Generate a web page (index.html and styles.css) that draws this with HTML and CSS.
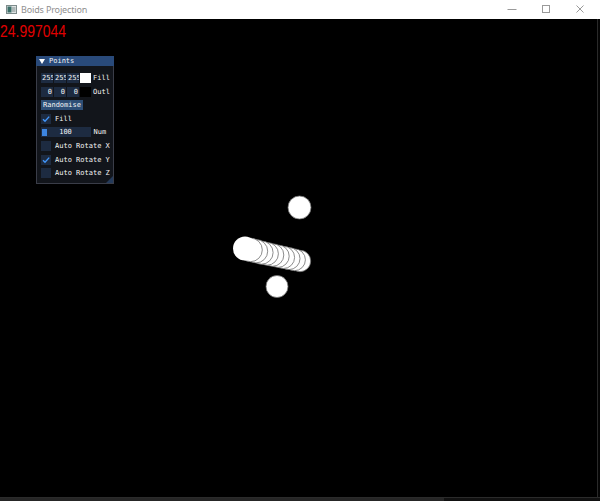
FILE: index.html
```html
<!DOCTYPE html>
<html>
<head>
<meta charset="utf-8">
<title>Boids Projection</title>
<link rel="stylesheet" href="styles.css">
</head>
<body>
<div class="window">
  <header class="titlebar">
    <svg class="app-icon" width="11" height="9" viewBox="0 0 11 9">
      <rect x="0.5" y="0.5" width="10" height="8" fill="#dfe4e4" stroke="#7d8b8b"/>
      <rect x="1.5" y="1.5" width="4" height="6" fill="#3b6e68"/>
      <rect x="6" y="2" width="3.5" height="5" fill="#aeb8b8"/>
    </svg>
    <span class="title">Boids Projection</span>
    <div class="controls">
      <svg class="ctl" width="10" height="10" viewBox="0 0 10 10"><line x1="0.5" y1="5.5" x2="9.5" y2="5.5" stroke="#9a9a9a" stroke-width="1"/></svg>
      <svg class="ctl" width="10" height="10" viewBox="0 0 10 10"><rect x="1.5" y="1.5" width="7" height="7" fill="none" stroke="#9a9a9a" stroke-width="1"/></svg>
      <svg class="ctl" width="10" height="10" viewBox="0 0 10 10"><path d="M1.5 1.5 L8.5 8.5 M8.5 1.5 L1.5 8.5" stroke="#9a9a9a" stroke-width="1"/></svg>
    </div>
  </header>
  <div class="main">
    <div class="viewport">
      <svg class="scene" width="597" height="478" viewBox="0 19 597 478">
        <g fill="#fff" stroke="#6e6e6e" stroke-width="0.8">
          <circle cx="299.5" cy="207.5" r="11.5"/>
          <circle cx="277" cy="286.5" r="11"/>
          <circle cx="300" cy="261" r="10.7"/>
          <circle cx="294.5" cy="259.8" r="10.9"/>
          <circle cx="289" cy="258.6" r="11"/>
          <circle cx="283.5" cy="257.4" r="11.1"/>
          <circle cx="278" cy="256.2" r="11.2"/>
          <circle cx="272.5" cy="255" r="11.3"/>
          <circle cx="267" cy="253.8" r="11.4"/>
          <circle cx="261.5" cy="252.6" r="11.6"/>
          <circle cx="256" cy="251.2" r="11.7"/>
          <circle cx="250.5" cy="249.9" r="11.8"/>
          <circle cx="245" cy="248.5" r="12" stroke="none"/>
        </g>
      </svg>
      <div class="fps">24.997044</div>
      <section class="panel">
        <div class="panel-title">
          <svg class="arrow" width="6" height="5" viewBox="0 0 6 5"><path d="M0 0 H6 L3 5 Z" fill="#fff"/></svg>
          <span>Points</span>
        </div>
        <div class="panel-body">
          <div class="row">
            <div class="frame num left">255</div>
            <div class="frame num left">255</div>
            <div class="frame num left">255</div>
            <div class="swatch white"></div>
            <span class="label">Fill</span>
          </div>
          <div class="row">
            <div class="frame num right">0</div>
            <div class="frame num right">0</div>
            <div class="frame num right">0</div>
            <div class="swatch black"></div>
            <span class="label">Outline</span>
          </div>
          <div class="row">
            <div class="button">Randomise</div>
          </div>
          <div class="row">
            <div class="frame check">
              <svg width="10" height="10" viewBox="0 0 10 10"><path d="M2 5.2 L4 7.3 L8.2 2.6" fill="none" stroke="#4296fa" stroke-width="1.4"/></svg>
            </div>
            <span class="label">Fill</span>
          </div>
          <div class="row">
            <div class="frame slider">
              <div class="grab"></div>
              <span class="slider-val">100</span>
            </div>
            <span class="label">Num Points</span>
          </div>
          <div class="row">
            <div class="frame check"></div>
            <span class="label">Auto Rotate X</span>
          </div>
          <div class="row">
            <div class="frame check">
              <svg width="10" height="10" viewBox="0 0 10 10"><path d="M2 5.2 L4 7.3 L8.2 2.6" fill="none" stroke="#4296fa" stroke-width="1.4"/></svg>
            </div>
            <span class="label">Auto Rotate Y</span>
          </div>
          <div class="row">
            <div class="frame check"></div>
            <span class="label">Auto Rotate Z</span>
          </div>
        </div>
        <div class="grip"></div>
      </section>
    </div>
    <div class="edge"></div>
    <div class="outside"></div>
  </div>
  <footer class="bottom">
    <div class="bottom-line"></div>
    <div class="bottom-band">
      <div class="band-left"></div>
      <div class="band-right"></div>
    </div>
  </footer>
</div>
</body>
</html>
```

FILE: styles.css
```css
html, body {
  margin: 0;
  padding: 0;
  background: #000;
}

.window {
  width: 600px;
  height: 501px;
  display: flex;
  flex-direction: column;
  overflow: hidden;
}

.titlebar {
  height: 19px;
  flex: none;
  background: #fff;
  display: flex;
  align-items: center;
}

.app-icon {
  margin-left: 6px;
  margin-top: -1px;
}

.title {
  margin-left: 4px;
  font-family: "Noto Sans", sans-serif;
  font-size: 9px;
  letter-spacing: -0.15px;
  color: #8f8f8f;
  line-height: 19px;
}

.controls {
  margin-left: auto;
  margin-right: 15px;
  display: flex;
  gap: 24px;
  align-items: center;
}

.ctl {
  display: block;
  margin-top: -1px;
}

.main {
  flex: 1;
  display: flex;
  min-height: 0;
}

.viewport {
  width: 597px;
  flex: none;
  position: relative;
  background: #000;
  overflow: hidden;
}

.edge {
  width: 1px;
  background: #2a2a2a;
}

.outside {
  flex: 1;
  background: #050505;
}

.scene {
  position: absolute;
  left: 0;
  top: 0;
}

.fps {
  position: absolute;
  left: 0;
  top: 4px;
  font-family: "Liberation Sans", Arial, sans-serif;
  font-size: 17px;
  line-height: 17px;
  color: #e00000;
  transform: scaleX(0.82);
  transform-origin: left top;
  white-space: nowrap;
}

.panel {
  position: absolute;
  left: 36px;
  top: 37px;
  width: 78px;
  height: 128px;
  box-sizing: border-box;
  background: #12151b;
  border: 1px solid #3a3d48;
  border-top: none;
  font-family: "DejaVu Sans Mono", monospace;
  font-size: 7px;
  color: #f4f4f4;
  display: flex;
  flex-direction: column;
}

.panel-title {
  height: 10px;
  flex: none;
  margin: 0 -1px;
  background: #294a7a;
  display: flex;
  align-items: center;
  line-height: 10px;
}

.arrow {
  margin-left: 3px;
  margin-right: 4px;
}

.panel-body {
  flex: 1;
  padding: 7px 3px 0 4px;
  overflow: hidden;
  display: flex;
  flex-direction: column;
  gap: 3.6px;
}

.row {
  height: 10px;
  display: flex;
  align-items: center;
  white-space: nowrap;
  flex: none;
  overflow: hidden;
}

.frame {
  height: 10px;
  background: #1d2b41;
  flex: none;
  overflow: hidden;
  line-height: 10px;
  box-sizing: border-box;
}

.num {
  width: 11.5px;
  margin-right: 1.5px;
}

.num.left {
  text-align: left;
  padding-left: 1px;
}

.num.right {
  text-align: right;
  padding-right: 0.5px;
}

.swatch {
  width: 10.5px;
  height: 10px;
  flex: none;
}

.swatch.white {
  background: #fff;
}

.swatch.black {
  background: #000;
}

.label {
  margin-left: 2.5px;
  line-height: 10px;
}

.button {
  height: 10px;
  line-height: 10px;
  padding: 0 2px;
  background: #2d4e76;
}

.check {
  width: 10px;
}

.check svg {
  display: block;
}

.check + .label {
  margin-left: 4px;
}

.slider {
  width: 50px;
  position: relative;
  display: flex;
  align-items: center;
  justify-content: center;
}

.grab {
  position: absolute;
  left: 1.3px;
  top: 1.5px;
  width: 4.7px;
  height: 7px;
  background: #3d85e0;
}

.slider-val {
  line-height: 10px;
  margin-left: -1px;
}

.slider + .label {
  margin-left: 2.5px;
}

.grip {
  position: absolute;
  right: 0;
  bottom: 0;
  width: 0;
  height: 0;
  border-left: 7px solid transparent;
  border-bottom: 7px solid #243a5a;
}

.bottom {
  height: 4px;
  flex: none;
  display: flex;
  flex-direction: column;
}

.bottom-line {
  height: 1px;
  background: #2b2b2b;
}

.bottom-band {
  flex: 1;
  display: flex;
}

.band-left {
  width: 444px;
  background: #262626;
}

.band-right {
  flex: 1;
  background: #111;
}
```
